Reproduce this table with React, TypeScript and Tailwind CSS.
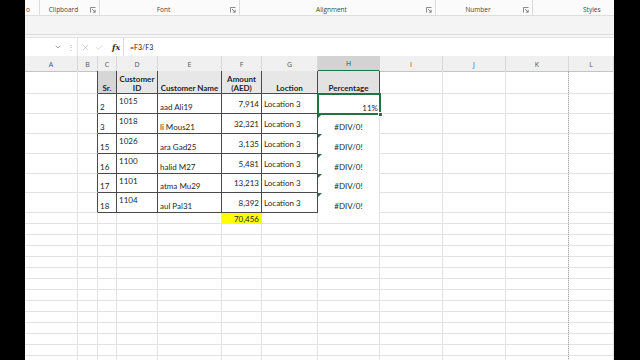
import { Check, ChevronDown, X } from "lucide-react";

const COLS =
  "grid grid-cols-[53px_20px_19px_41px_64px_40px_56px_62px_63px_63px_63px_45px]";
const LETTERS = ["A", "B", "C", "D", "E", "F", "G", "H", "I", "J", "K", "L"];

const ROWS = [
  { sr: "2", id: "1015", name: "aad Ali19", amt: "7,914", loc: "Location 3", pct: "11%" },
  { sr: "3", id: "1018", name: "li Mous21", amt: "32,321", loc: "Location 3", pct: "#DIV/0!" },
  { sr: "15", id: "1026", name: "ara Gad25", amt: "3,135", loc: "Location 3", pct: "#DIV/0!" },
  { sr: "16", id: "1100", name: "halid M27", amt: "5,481", loc: "Location 3", pct: "#DIV/0!" },
  { sr: "17", id: "1101", name: "atma Mu29", amt: "13,213", loc: "Location 3", pct: "#DIV/0!" },
  { sr: "18", id: "1104", name: "aul Pal31", amt: "8,392", loc: "Location 3", pct: "#DIV/0!" },
];
const HEIGHTS = ["h-[20px]", "h-[20px]", "h-[20px]", "h-[20px]", "h-[19px]", "h-[20px]"];

const grid = "border-r border-b border-[#e2e2e2]";
const dark = "border-r border-b border-[#4a4a4a]";
const edge = "border-r border-b border-b-[#e2e2e2] border-r-[#4a4a4a]";

function Launcher() {
  return (
    <svg width="6" height="6" viewBox="0 0 6 6" fill="none" stroke="#707070" strokeWidth="0.8">
      <path d="M0.5 5.5V0.5H5.5" />
      <path d="M2 2L5.2 5.2M5.2 2.8V5.2H2.8" />
    </svg>
  );
}

function Group({ label, width }: { label: string; width: string }) {
  return (
    <div className={`flex h-full items-center border-r border-[#dcdcdc] pt-[4px] ${width}`}>
      <span className="flex-1 text-center">{label}</span>
      <span className="flex w-[12px] justify-center">
        <Launcher />
      </span>
    </div>
  );
}

function Ribbon() {
  return (
    <div className="font-['Open_Sans',sans-serif] text-[6.5px] text-[#444]">
      <div className="flex h-[15px] bg-[#fbfbfb]">
        <div className="flex h-full w-[15px] items-center border-r border-[#dcdcdc] pt-[4px] pl-[1px]">o</div>
        <Group label="Clipboard" width="w-[60px]" />
        <Group label="Font" width="w-[140px]" />
        <Group label="Alignment" width="w-[196px]" />
        <Group label="Number" width="w-[97px]" />
        <div className="flex h-full flex-1 items-center pt-[4px] pl-[50px]">Styles</div>
      </div>
      <div className="h-[20px] border-y border-[#dedede] bg-[#f4f4f4]" />
      <div className="h-[3px] border-b border-[#e2e2e2] bg-[#f7f7f7]" />
      <div className="flex h-[18px] items-center bg-white">
        <div className="flex h-full w-[40px] items-center justify-end pr-[3px] text-[#555]">
          <ChevronDown size={8} strokeWidth={1.6} />
        </div>
        <div className="flex w-[12px] justify-center text-[8px] leading-none text-[#aaa]">⋮</div>
        <div className="flex h-full flex-1 items-center gap-[5px] border-l border-[#e6e6e6] pl-[3px]">
          <X size={9} strokeWidth={1.3} color="#b0b0b0" />
          <Check size={9} strokeWidth={1.3} color="#b0b0b0" />
          <span className="ml-[3px] font-['DejaVu_Serif',serif] text-[8px] font-bold italic text-[#333]">fx</span>
        </div>
        <div className="flex h-full w-[491px] items-center border-l border-[#dcdcdc] pl-[6px] font-['Lato',sans-serif] text-[7px] text-[#222]">
          =F3/F3
        </div>
      </div>
    </div>
  );
}

function ColumnHeaders() {
  return (
    <div className={`${COLS} h-[15px] bg-[#f0f0f0] font-['Open_Sans',sans-serif] text-[7px] text-[#555]`}>
      {LETTERS.map((l) =>
        l === "H" ? (
          <div key={l} className="flex items-center justify-center border-r border-b-2 border-r-[#d4d4d4] border-b-[#217346] bg-[#d3d3d3] pt-[3px] text-[#185c37]">
            {l}
          </div>
        ) : (
          <div key={l} className="flex items-center justify-center border-r border-b border-r-[#d8d8d8] border-b-[#c4c4c4] pt-[3px]">
            {l}
          </div>
        )
      )}
    </div>
  );
}

function HeaderRow() {
  const one = "flex items-end justify-center pb-[2px] text-center font-bold leading-[6px]";
  const two = "flex flex-col items-center justify-center pt-[3px] text-center font-bold leading-[9px]";
  return (
    <div className={`${COLS} h-[23px]`}>
      <div className={grid} />
      <div className={edge} />
      <div className={`${dark} ${one} bg-[#d6d6d6]`}>Sr.</div>
      <div className={`${dark} ${two} bg-[#e7e7e7]`}>
        <span>Customer</span>
        <span>ID</span>
      </div>
      <div className={`${dark} ${one} bg-[#e7e7e7]`}>Customer Name</div>
      <div className={`${dark} ${two} bg-[#e7e7e7]`}>
        <span>Amount</span>
        <span>(AED)</span>
      </div>
      <div className={`${dark} ${one} bg-[#e7e7e7]`}>Loction</div>
      <div className={`${dark} ${one} bg-[#e2e2e2]`}>Percentage</div>
      <div className={grid} />
      <div className={grid} />
      <div className={grid} />
      <div className={grid} />
    </div>
  );
}

function DataRow({ r, i }: { r: (typeof ROWS)[number]; i: number }) {
  return (
    <div className={`${COLS} ${HEIGHTS[i]}`}>
      <div className={grid} />
      <div className={edge} />
      <div className={`${dark} flex items-end pb-[2px] pl-[2px] leading-[8px]`}>{r.sr}</div>
      <div className={`${dark} flex items-start pl-[2px] pt-[2px]`}>{r.id}</div>
      <div className={`${dark} flex items-end pb-[2px] pl-[2px] leading-[8px]`}>{r.name}</div>
      <div className={`${dark} flex items-center justify-end pr-[2px]`}>{r.amt}</div>
      <div className={`${dark} flex items-center pl-[2px]`}>{r.loc}</div>
      {i === 0 ? (
        <div className="relative flex items-end justify-end pb-[2px] pr-[2px] leading-[8px]">
          {r.pct}
          <div className="absolute -top-[1px] -left-[1px] -right-[1px] -bottom-[1px] z-10 border-2 border-[#217346]" />
          <div className="absolute -right-[3px] -bottom-[3px] z-20 h-[5px] w-[5px] border border-white bg-[#217346]" />
        </div>
      ) : (
        <div className="relative flex items-end justify-center border-r border-[#e2e2e2] pb-[3px] leading-[8px]">
          {r.pct}
          <div className="absolute top-0 left-0 h-0 w-0 border-t-[4px] border-r-[4px] border-t-[#217346] border-r-transparent" />
        </div>
      )}
      <div className={grid} />
      <div className={grid} />
      <div className={grid} />
      <div className={grid} />
    </div>
  );
}

function EmptyRow({ total }: { total?: string }) {
  return (
    <div className={`${COLS} h-[11px]`}>
      {LETTERS.map((l) =>
        l === "F" && total ? (
          <div key={l} className="flex items-center justify-end bg-[#ffff00] pr-[3px]">
            {total}
          </div>
        ) : (
          <div key={l} className={grid} />
        )
      )}
    </div>
  );
}

export default function App() {
  return (
    <div className="flex h-[360px] w-[640px] overflow-hidden bg-black">
      <div className="ml-[25px] flex h-full w-[589px] flex-col overflow-hidden bg-white">
        <Ribbon />
        <ColumnHeaders />
        <div className="relative font-['Lato',sans-serif] text-[8px] leading-[10px] text-[#1f1f1f]">
          <HeaderRow />
          {ROWS.map((r, i) => (
            <DataRow key={r.sr} r={r} i={i} />
          ))}
          <EmptyRow total="70,456" />
          {Array.from({ length: 13 }).map((_, i) => (
            <EmptyRow key={i} />
          ))}
          {/* page break */}
          <div className="absolute top-0 bottom-0 left-[543px] border-l border-dotted border-[#a8a8a8]" />
        </div>
      </div>
    </div>
  );
}
